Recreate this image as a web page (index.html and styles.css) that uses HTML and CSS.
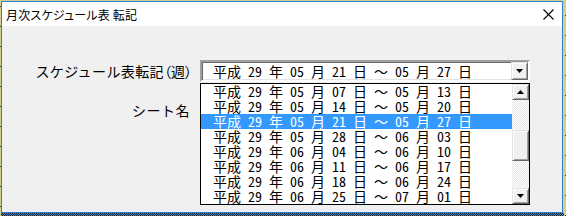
FILE: index.html
```html
<!DOCTYPE html>
<html lang="ja">
<head>
<meta charset="utf-8">
<link rel="stylesheet" href="styles.css">
</head>
<body>
<div class="dialog">
  <div class="titlebar">
    <span class="title">月次スケジュール表 転記</span>
    <span class="close"><svg width="11" height="11" viewBox="0 0 11 11"><path d="M0.5 0.5L10.5 10.5M10.5 0.5L0.5 10.5" stroke="#000" stroke-width="1.1" fill="none"/></svg></span>
  </div>
  <div class="body">
    <div class="row">
      <span class="lbl">スケジュール表転記<span class="paren">（週）</span></span>
      <div class="combo">
        <span class="combo-text mono">平成 29 年 05 月 21 日 <span class="fw">～</span> 05 月 27 日</span>
        <span class="btn3d dd"><svg width="7" height="4" viewBox="0 0 7 4"><polygon points="0,0 7,0 3.5,4" fill="#000"/></svg></span>
      </div>
    </div>
    <div class="row">
      <span class="lbl lbl-sheet">シート名</span>
      <div class="field"></div>
    </div>
    <div class="listbox">
      <div class="items mono">
        <div class="item">平成 29 年 05 月 07 日 <span class="fw">～</span> 05 月 13 日</div>
        <div class="item">平成 29 年 05 月 14 日 <span class="fw">～</span> 05 月 20 日</div>
        <div class="item sel">平成 29 年 05 月 21 日 <span class="fw">～</span> 05 月 27 日</div>
        <div class="item">平成 29 年 05 月 28 日 <span class="fw">～</span> 06 月 03 日</div>
        <div class="item">平成 29 年 06 月 04 日 <span class="fw">～</span> 06 月 10 日</div>
        <div class="item">平成 29 年 06 月 11 日 <span class="fw">～</span> 06 月 17 日</div>
        <div class="item">平成 29 年 06 月 18 日 <span class="fw">～</span> 06 月 24 日</div>
        <div class="item">平成 29 年 06 月 25 日 <span class="fw">～</span> 07 月 01 日</div>
      </div>
      <div class="scrollbar">
        <span class="btn3d sbtn"><svg width="7" height="4" viewBox="0 0 7 4"><polygon points="0,4 7,4 3.5,0" fill="#000"/></svg></span>
        <span class="track track-top"></span>
        <span class="btn3d thumb"></span>
        <span class="track track-bot"></span>
        <span class="btn3d sbtn"><svg width="7" height="4" viewBox="0 0 7 4"><polygon points="0,0 7,0 3.5,4" fill="#000"/></svg></span>
      </div>
    </div>
  </div>
</div>
<div class="ants"></div>
</body>
</html>
```
FILE: styles.css
```css
* { box-sizing: border-box; margin: 0; padding: 0; }
html, body { width: 566px; height: 216px; overflow: hidden; }
body {
  font-family: "Noto Sans CJK JP", sans-serif;
  background:
    repeating-linear-gradient(to bottom, transparent 0 6px, #3a3a3a 6px 7px, transparent 7px 20px) 0 0 / 1px 100% no-repeat,
    repeating-linear-gradient(to bottom, transparent 0 15px, #3a3a3a 15px 16px, transparent 16px 20px) 565px 0 / 1px 100% no-repeat,
    #d2cf8f;
}
.dialog {
  margin: 1px 0 0 1px;
  width: 562px;
  height: 212px;
  border: 1px solid #2d7ed6;
  background: #f0f0f0;
  display: flex;
  flex-direction: column;
}
.titlebar {
  height: 24px;
  background: #fff;
  display: flex;
  align-items: center;
  justify-content: space-between;
  padding: 0 8px 0 4px;
}
.title {
  font-size: 12px;
  color: #000;
  font-feature-settings: "palt";
  letter-spacing: 0.2px;
}
.close { display: flex; width: 11px; height: 11px; }
.body {
  position: relative;
  flex: 1;
  padding: 34px 0 0 0;
  display: flex;
  flex-direction: column;
  gap: 17px;
}
.row {
  display: flex;
  align-items: center;
  height: 22px;
}
.lbl {
  width: 190px;
  text-align: right;
  font-size: 14px;
  color: #000;
  margin-right: 8px;
  white-space: nowrap;
  letter-spacing: 0.4px;
}
.paren { font-feature-settings: "palt"; letter-spacing: 0; }
.lbl-sheet { padding-right: 2px; letter-spacing: 0.5px; }
.combo, .field {
  width: 330px;
  height: 22px;
  background: #fff;
  border: 2px solid;
  border-color: #a0a0a0 #fff #fff #a0a0a0;
  box-shadow: inset 1px 1px #696969, inset -1px -1px #e3e3e3;
  display: flex;
  align-items: center;
  justify-content: space-between;
}
.mono {
  font-family: "Noto Sans CJK JP", sans-serif;
  font-feature-settings: "hwid";
  font-size: 14px;
  color: #000;
  white-space: pre;
}
.fw { font-feature-settings: normal; }
.combo-text { padding-left: 11px; line-height: 18px; }
.btn3d {
  display: flex;
  align-items: center;
  justify-content: center;
  background: #f0f0f0;
  border: 1px solid;
  border-color: #e3e3e3 #696969 #696969 #e3e3e3;
  box-shadow: inset 1px 1px #fff, inset -1px -1px #a0a0a0;
}
.dd { width: 17px; height: 18px; }
.listbox {
  position: absolute;
  left: 198px;
  top: 57px;
  width: 330px;
  height: 122px;
  border: 1px solid #000;
  background: #fff;
  display: flex;
}
.items { flex: 1; display: flex; flex-direction: column; }
.item {
  height: 15px;
  line-height: 15px;
  padding-left: 12px;
}
.item.sel {
  background: #3399ff;
  color: #fff;
  outline: 1px dotted #c0702a;
  outline-offset: -1px;
}
.scrollbar {
  width: 17px;
  display: flex;
  flex-direction: column;
}
.sbtn { height: 16px; }
.track {
  background: repeating-conic-gradient(#fff 0 25%, #e6e6e6 0 50%) 0 0 / 2px 2px;
}
.track-top { height: 30px; }
.thumb { height: 31px; }
.track-bot { flex: 1; }
.ants {
  margin-left: 1px;
  width: 563px;
  height: 3px;
  background: repeating-conic-gradient(#1a1a1a 0 25%, #3f8fe0 0 50%) 0 0 / 2px 2px;
}
```
